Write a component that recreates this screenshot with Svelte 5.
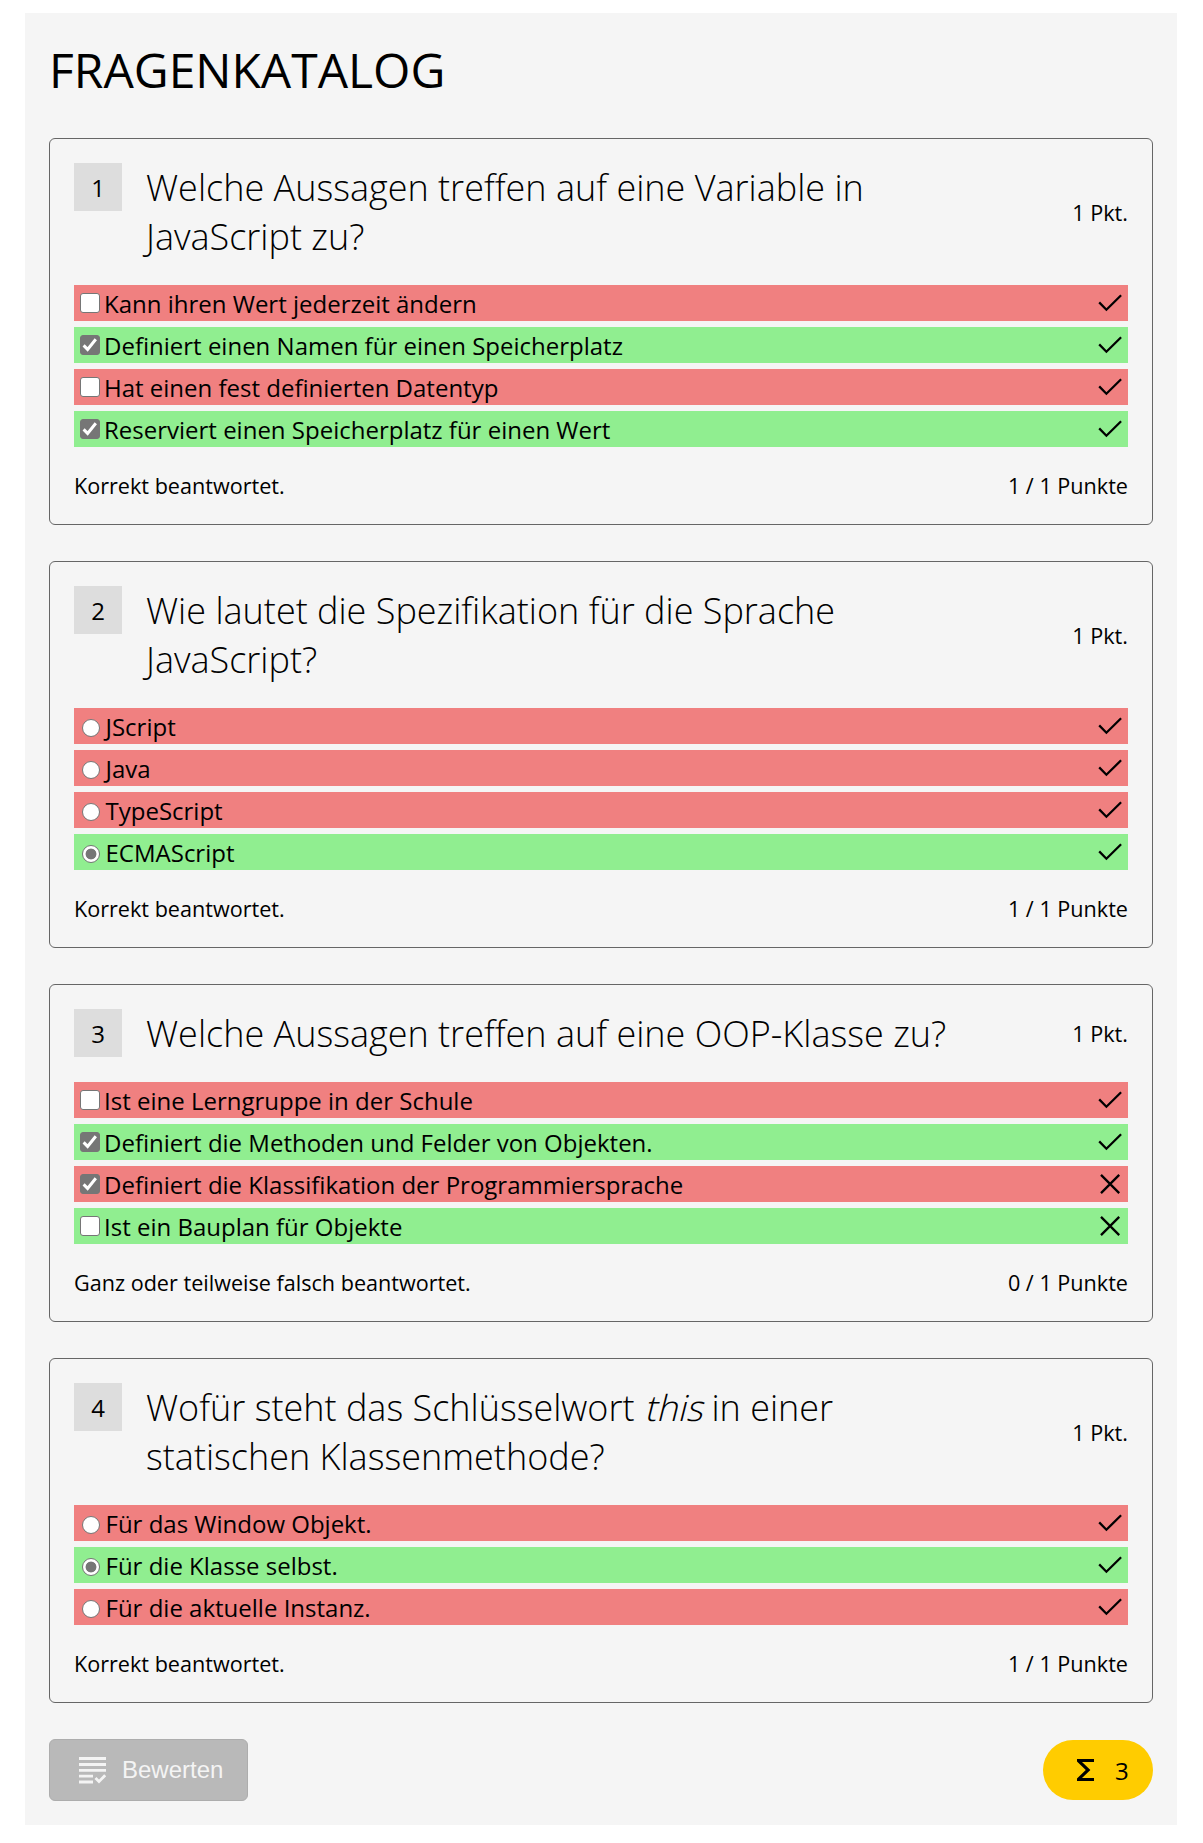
<script>
  const questions = [
    {
      type: 'checkbox',
      title: [{ text: 'Welche Aussagen treffen auf eine Variable in JavaScript zu?' }],
      answers: [
        { text: 'Kann ihren Wert jederzeit ändern', checked: false, correct: false },
        { text: 'Definiert einen Namen für einen Speicherplatz', checked: true, correct: true },
        { text: 'Hat einen fest definierten Datentyp', checked: false, correct: false },
        { text: 'Reserviert einen Speicherplatz für einen Wert', checked: true, correct: true }
      ]
    },
    {
      type: 'radio',
      title: [{ text: 'Wie lautet die Spezifikation für die Sprache JavaScript?' }],
      answers: [
        { text: 'JScript', checked: false, correct: false },
        { text: 'Java', checked: false, correct: false },
        { text: 'TypeScript', checked: false, correct: false },
        { text: 'ECMAScript', checked: true, correct: true }
      ]
    },
    {
      type: 'checkbox',
      title: [{ text: 'Welche Aussagen treffen auf eine OOP-Klasse zu?' }],
      answers: [
        { text: 'Ist eine Lerngruppe in der Schule', checked: false, correct: false },
        { text: 'Definiert die Methoden und Felder von Objekten.', checked: true, correct: true },
        { text: 'Definiert die Klassifikation der Programmiersprache', checked: true, correct: false },
        { text: 'Ist ein Bauplan für Objekte', checked: false, correct: true }
      ]
    },
    {
      type: 'radio',
      title: [
        { text: 'Wofür steht das Schlüsselwort ' },
        { text: 'this', em: true },
        { text: ' in einer statischen Klassenmethode?' }
      ],
      answers: [
        { text: 'Für das Window Objekt.', checked: false, correct: false },
        { text: 'Für die Klasse selbst.', checked: true, correct: true },
        { text: 'Für die aktuelle Instanz.', checked: false, correct: false }
      ]
    }
  ];

  const score = (q) => (q.answers.every((a) => a.checked === a.correct) ? 1 : 0);
  const total = questions.reduce((sum, q) => sum + score(q), 0);
</script>

<main class="panel">
  <h1>FRAGENKATALOG</h1>

  {#each questions as q, i}
    <section class="card">
      <header>
        <span class="number">{i + 1}</span>
        <h2>{#each q.title as part}{#if part.em}<em>{part.text}</em>{:else}{part.text}{/if}{/each}</h2>
        <span class="points">1 Pkt.</span>
      </header>

      <div class="answers">
        {#each q.answers as a}
          <label class="answer" class:correct={a.correct}>
            <span class="control {q.type}">
              <input type={q.type} name={`q${i}`} checked={a.checked} />
              {#if q.type === 'checkbox' && a.checked}
                <svg class="tick" viewBox="0 0 20 20"><path d="M3.6 10.4 7.6 14.4 15.8 4.2" /></svg>
              {/if}
            </span>
            <span class="text">{a.text}</span>
            <svg class="mark" viewBox="0 0 24 24">
              {#if a.checked === a.correct}
                <path d="M1.2 11.4 8.4 18.7 23.1 4.3" />
              {:else}
                <path d="M3 2.9 21.2 21.1M21.2 2.9 3 21.1" />
              {/if}
            </svg>
          </label>
        {/each}
      </div>

      <footer>
        <span>{score(q) ? 'Korrekt beantwortet.' : 'Ganz oder teilweise falsch beantwortet.'}</span>
        <span>{score(q)} / 1 Punkte</span>
      </footer>
    </section>
  {/each}

  <div class="actions">
    <button disabled>
      <svg class="grade" viewBox="0 0 27 27">
        <path d="M0 1.5H27M0 7.5H27M0 13.3H27M0 19.2H14M0 25H14" />
        <path d="M16.5 21 20 24.6 26.2 18.2" />
      </svg>
      Bewerten
    </button>
    <div class="total">
      <svg class="sigma" viewBox="0 0 17 22">
        <path d="M0 0H17V3H5L13.4 11 5 19H17V22H0V19.6L8.8 11 0 2.4Z" />
      </svg>
      <span>{total}</span>
    </div>
  </div>
</main>

<style>
  :global(body) {
    background: #fff;
  }
  .panel {
    box-sizing: border-box;
    width: 1152px;
    height: 1812px;
    margin: 13px 0 0 25px;
    padding: 24px;
    background: #f5f5f5;
    color: #000;
    font: 24px/33px 'Open Sans', sans-serif;
  }
  h1 {
    margin: 0 0 36px;
    font-size: 48px;
    line-height: 65px;
    font-weight: 400;
  }
  .card {
    box-sizing: border-box;
    margin-bottom: 36px;
    padding: 24px;
    border: 1px solid #666;
    border-radius: 6px;
  }
  header {
    display: flex;
    align-items: center;
    gap: 24px;
  }
  .number {
    align-self: flex-start;
    flex: none;
    width: 48px;
    height: 48px;
    background: #ddd;
    line-height: 50px;
    text-align: center;
  }
  h2 {
    flex: 0 1 820px;
    margin: 0;
    font-size: 36px;
    line-height: 49px;
    font-weight: 300;
  }
  /* Slanted upright face, pivoting on the baseline */
  em {
    display: inline-block;
    font-style: normal;
    transform: skewX(-14deg);
    transform-origin: 0 38px;
  }
  .points {
    margin-left: auto;
    white-space: nowrap;
    font-size: 21.6px;
    line-height: 29px;
  }
  .answers {
    display: grid;
    gap: 6px;
    margin: 24px 0;
  }
  .answer {
    display: flex;
    align-items: center;
    height: 36px;
    box-sizing: border-box;
    padding: 0 6px;
    background: #f08080;
  }
  .answer.correct {
    background: #90ee90;
  }
  .control {
    display: grid;
    flex: none;
    width: 24px;
  }
  .control.radio {
    width: 25.5px;
  }
  .control > * {
    grid-area: 1 / 1;
  }
  input {
    appearance: none;
    box-sizing: border-box;
    margin: 0;
    background: #fff;
    border: 1.5px solid #767676;
  }
  input[type='checkbox'] {
    width: 20px;
    height: 20px;
    border-radius: 3px;
  }
  input[type='checkbox']:checked {
    background: #767676;
  }
  input[type='radio'] {
    width: 18px;
    height: 18px;
    margin: 4px 0 0 2px;
    border-radius: 50%;
  }
  input[type='radio']:checked {
    background: radial-gradient(circle, #767676 5px, #fff 5.8px);
  }
  .tick {
    width: 20px;
    height: 20px;
    fill: none;
    stroke: #fff;
    stroke-width: 3;
  }
  .mark {
    width: 24px;
    height: 24px;
    margin-left: auto;
    fill: none;
    stroke: #000;
    stroke-width: 2.3;
  }
  footer {
    display: flex;
    justify-content: space-between;
    font-size: 21.6px;
    line-height: 29px;
  }
  .actions {
    display: flex;
    align-items: center;
    justify-content: space-between;
  }
  button {
    display: flex;
    align-items: center;
    gap: 16px;
    box-sizing: border-box;
    width: 199px;
    height: 62px;
    padding: 0 0 0 29px;
    border: 1px solid #adadad;
    border-radius: 6px;
    background: #b9b9b9;
    color: #f4f4f4;
    font: 24px 'Liberation Sans', Arial, sans-serif;
  }
  .grade {
    width: 27px;
    height: 27px;
    fill: none;
    stroke: currentColor;
    stroke-width: 2.8;
  }
  .total {
    display: flex;
    align-items: center;
    gap: 21px;
    box-sizing: border-box;
    width: 110px;
    height: 60px;
    padding-left: 34px;
    border-radius: 30px;
    background: #fc0;
  }
  .total span {
    padding-top: 1px;
  }
  .sigma {
    width: 17px;
    height: 22px;
  }
</style>
